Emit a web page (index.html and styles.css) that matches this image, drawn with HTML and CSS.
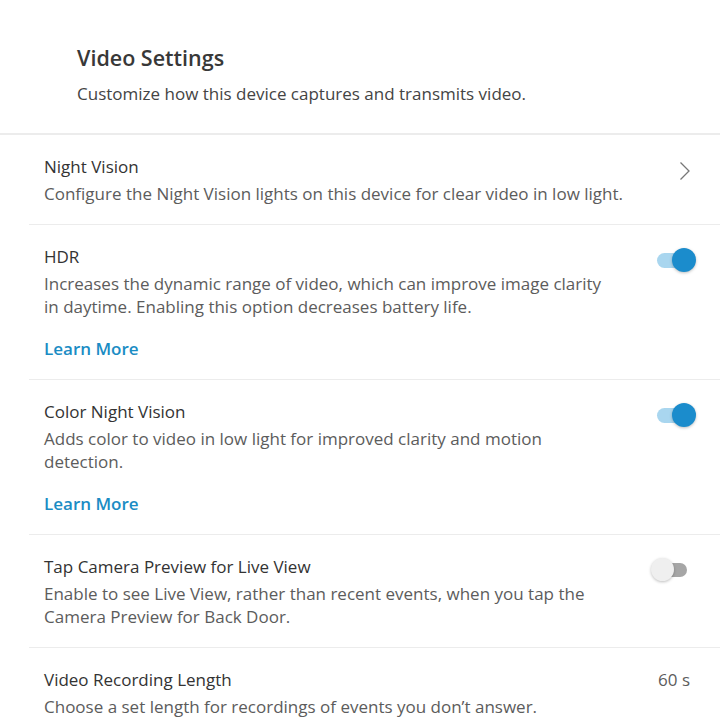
FILE: index.html
```html
<!DOCTYPE html>
<html>
<head>
<meta charset="utf-8">
<link rel="stylesheet" href="styles.css">
</head>
<body>
<div class="page">
  <header class="header">
    <h1 class="title">Video Settings</h1>
    <p class="subtitle">Customize how this device captures and transmits video.</p>
  </header>
  <div class="list">
    <div class="row">
      <div class="text">
        <div class="row-title">Night Vision</div>
        <div class="row-desc">Configure the Night Vision lights on this device for clear video in low light.</div>
      </div>
      <div class="control chev">
        <svg class="chevron" width="12" height="20" viewBox="0 0 12 20"><path d="M1.5 1.5 L10 10 L1.5 18.5" fill="none" stroke="#777" stroke-width="1.3"/></svg>
      </div>
    </div>
    <div class="row">
      <div class="text">
        <div class="row-title">HDR</div>
        <div class="row-desc">Increases the dynamic range of video, which can improve image clarity in daytime. Enabling this option decreases battery life.</div>
        <a class="learn">Learn More</a>
      </div>
      <div class="control"><span class="toggle on"><span class="thumb"></span></span></div>
    </div>
    <div class="row">
      <div class="text">
        <div class="row-title">Color Night Vision</div>
        <div class="row-desc">Adds color to video in low light for improved clarity and motion detection.</div>
        <a class="learn">Learn More</a>
      </div>
      <div class="control"><span class="toggle on"><span class="thumb"></span></span></div>
    </div>
    <div class="row">
      <div class="text">
        <div class="row-title">Tap Camera Preview for Live View</div>
        <div class="row-desc">Enable to see Live View, rather than recent events, when you tap the Camera Preview for Back Door.</div>
      </div>
      <div class="control"><span class="toggle off"><span class="thumb"></span></span></div>
    </div>
    <div class="row">
      <div class="text">
        <div class="row-title">Video Recording Length</div>
        <div class="row-desc">Choose a set length for recordings of events you don’t answer.</div>
      </div>
      <div class="value">60 s</div>
    </div>
  </div>
</div>
</body>
</html>
```

FILE: styles.css
```css
* { box-sizing: border-box; }
html, body { margin: 0; padding: 0; background: #fff; }
body {
  font-family: "Open Sans", "Noto Sans", sans-serif;
  color: #333;
  width: 720px;
  height: 720px;
  overflow: hidden;
}
.header {
  padding: 44px 0 28px 77px;
  border-bottom: 2px solid #ececec;
}
.title {
  margin: 0;
  font-size: 21.5px;
  line-height: 28px;
  font-weight: 600;
  color: #383838;
}
.subtitle {
  margin: 11px 0 0;
  font-size: 17px;
  line-height: 22px;
  color: #444;
}
.list { margin-left: 29px; }
.row {
  display: flex;
  align-items: flex-start;
  padding: 20px 25px 19px 15px;
  border-bottom: 1.5px solid #ececec;
}
.text { flex: 1; padding-right: 45px; }
.row-title {
  font-size: 17px;
  line-height: 23px;
  color: #333;
  margin-bottom: 4px;
}
.row-desc {
  font-size: 17px;
  line-height: 23px;
  color: #5c5c5c;
}
.learn {
  display: block;
  margin-top: 19px;
  font-size: 17px;
  line-height: 23px;
  font-weight: 600;
  color: #1a8cc4;
}
.control {
  display: flex;
  align-items: center;
  padding-top: 8px;
}
.control.chev { padding-top: 6px; margin-right: 4px; }
.toggle {
  position: relative;
  display: block;
  width: 38px;
  height: 15px;
  border-radius: 7.5px;
}
.toggle.on { background: #a9d6ef; }
.toggle.off { background: #a6a6a6; width: 30px; margin-right: 8px; height: 14px; }
.thumb {
  position: absolute;
  top: -5px;
  width: 24px;
  height: 24px;
  border-radius: 50%;
  box-shadow: 0 1px 3px rgba(0,0,0,0.25);
}
.toggle.on .thumb { right: -1px; background: #1b8ccc; }
.toggle.off .thumb { left: -6px; top: -5px; width: 23px; height: 23px; background: #efefef; }
.value {
  font-size: 17px;
  line-height: 23px;
  color: #5c5c5c;
  margin-right: 5px;
}
```
